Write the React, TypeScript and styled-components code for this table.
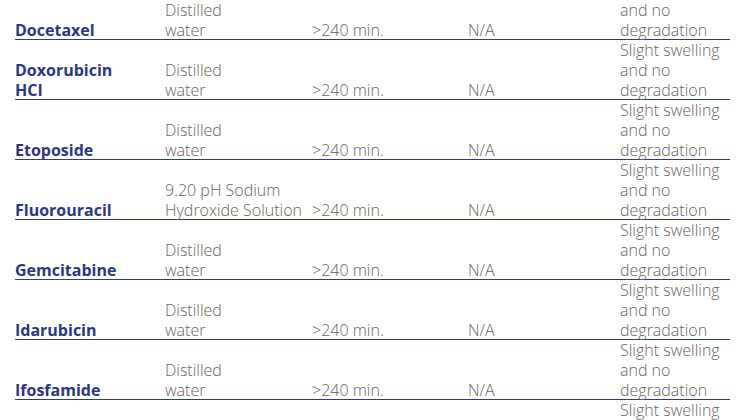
import React from 'react'
import styled, { createGlobalStyle } from 'styled-components'

const GlobalStyle = createGlobalStyle`
  html, body {
    margin: 0;
    padding: 0;
    background: #ffffff;
    overflow: hidden;
  }
`

const Table = styled.div`
  margin: -20px 0 0 15px;
  width: 715px;
  font-family: 'Open Sans', 'Liberation Sans', sans-serif;
  font-weight: 300;
  font-size: 16px;
  line-height: 20px;
  color: #646464;
`
const Row = styled.div`
  display: grid;
  grid-template-columns: 150px 147px 156px 152px 110px;
  align-items: end;
  height: 60px;
  padding-bottom: 7px;
  box-sizing: border-box;
  border-bottom: 1px solid #2e3a87;
`
const Name = styled.div`
  font-weight: 700;
  color: #2b3784;
`
const Cell = styled.div`
  white-space: nowrap;
`

interface IResult {
  drug: string
  solvent: string
  time: string
  rate: string
  note: string
}

const results: IResult[] = [
  { drug: 'Docetaxel', solvent: 'Distilled\nwater', time: '>240 min.', rate: 'N/A', note: 'Slight swelling\nand no\ndegradation' },
  { drug: 'Doxorubicin\nHCI', solvent: 'Distilled\nwater', time: '>240 min.', rate: 'N/A', note: 'Slight swelling\nand no\ndegradation' },
  { drug: 'Etoposide', solvent: 'Distilled\nwater', time: '>240 min.', rate: 'N/A', note: 'Slight swelling\nand no\ndegradation' },
  { drug: 'Fluorouracil', solvent: '9.20 pH Sodium\nHydroxide Solution', time: '>240 min.', rate: 'N/A', note: 'Slight swelling\nand no\ndegradation' },
  { drug: 'Gemcitabine', solvent: 'Distilled\nwater', time: '>240 min.', rate: 'N/A', note: 'Slight swelling\nand no\ndegradation' },
  { drug: 'Idarubicin', solvent: 'Distilled\nwater', time: '>240 min.', rate: 'N/A', note: 'Slight swelling\nand no\ndegradation' },
  { drug: 'Ifosfamide', solvent: 'Distilled\nwater', time: '>240 min.', rate: 'N/A', note: 'Slight swelling\nand no\ndegradation' },
  { drug: 'Irinotecan', solvent: 'Distilled\nwater', time: '>240 min.', rate: 'N/A', note: 'Slight swelling\nand no\ndegradation' },
]

const lines = (text: string) =>
  text.split('\n').map((line, i) => <div key={i}>{line}</div>)

const App = () => (
  <>
    <GlobalStyle />
    <Table>
      {results.map((item) => (
        <Row key={item.drug}>
          <Name>{lines(item.drug)}</Name>
          <Cell>{lines(item.solvent)}</Cell>
          <Cell>{item.time}</Cell>
          <Cell>{item.rate}</Cell>
          <Cell>{lines(item.note)}</Cell>
        </Row>
      ))}
    </Table>
  </>
)

export default App
